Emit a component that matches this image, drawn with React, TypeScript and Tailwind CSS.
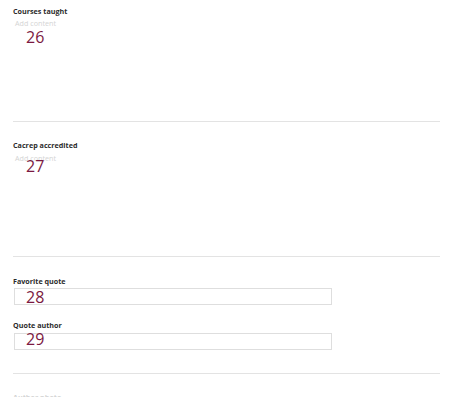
const font = { fontFamily: '"Open Sans", "Liberation Sans", sans-serif' };

function Label({ text }: { text: string }) {
  return (
    <div className="text-[7.2px] leading-[10px] font-bold text-[#2b2b2b]">
      {text}
    </div>
  );
}

function Num({ n }: { n: number }) {
  return (
    <div className="pl-[13px] text-[16px] leading-[20px] text-[#7b1941]">{n}</div>
  );
}

export default function App() {
  return (
    <div className="w-[467px] h-[397px] overflow-hidden bg-white" style={font}>
      <div className="px-[13px] w-[453px]">
        {/* Courses taught */}
        <div className="pt-[6px] h-[121px]">
          <Label text="Courses taught" />
          <div className="mt-[2px] pl-[2px] text-[7.2px] leading-[10px] text-[#d4d4d4]">
            Add content
          </div>
          <div className="-mt-[1px]">
            <Num n={26} />
          </div>
        </div>
        <hr className="border-0 border-t border-[#e3e3e3]" />

        {/* Cacrep accredited */}
        <div className="pt-[18px] h-[134px]">
          <Label text="Cacrep accredited" />
          <div className="mt-[3px] pl-[2px] text-[7.2px] leading-[10px] text-[#d4d4d4]">
            Add content
          </div>
          <div className="-mt-[7px]">
            <Num n={27} />
          </div>
        </div>
        <hr className="border-0 border-t border-[#e3e3e3]" />

        {/* Quote fields */}
        <div className="pt-[19px] h-[116px]">
          <Label text="Favorite quote" />
          <div className="mt-[2px] ml-[1px] w-[318px] h-[17px] border border-[#dedede]">
            <div className="pl-[11px] text-[16px] leading-[16px] text-[#7b1941]">28</div>
          </div>
          <div className="mt-[15px]">
            <Label text="Quote author" />
          </div>
          <div className="mt-[3px] ml-[1px] w-[318px] h-[17px] border border-[#dedede]">
            <div className="pl-[11px] text-[16px] leading-[16px] text-[#7b1941] -mt-[3px]">29</div>
          </div>
        </div>
        <hr className="border-0 border-t border-[#e3e3e3]" />

        <div className="pt-[18px] opacity-20">
          <Label text="Author photo" />
        </div>
      </div>
    </div>
  );
}
